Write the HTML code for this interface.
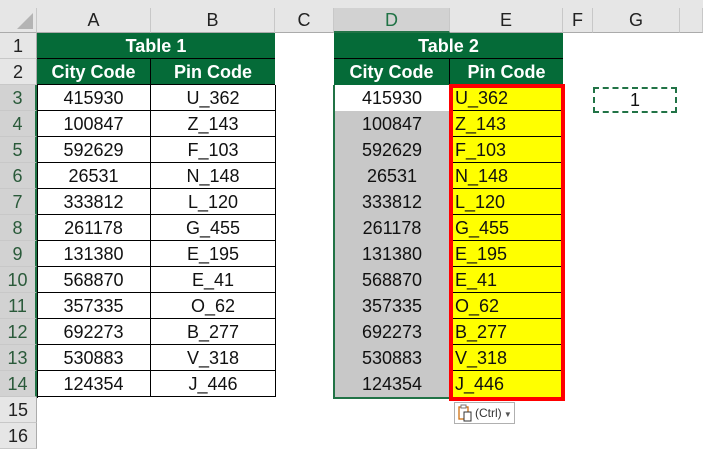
<!DOCTYPE html>
<html><head><meta charset="utf-8"><style>
body{margin:0;width:703px;height:441px;overflow:hidden;background:#fff;font-family:"Liberation Sans",Calibri,sans-serif;position:relative}
div{position:absolute;box-sizing:border-box}
.ch{top:8px;height:25px;background:#e6e6e6;border-right:1px solid #c8c8c8;border-bottom:1px solid #ababab;text-align:center;font-size:18px;line-height:25px;color:#222}
.rh{left:0;width:37px;height:26px;background:#e6e6e6;border-bottom:1px solid #c8c8c8;border-right:1px solid #ababab;text-align:center;font-size:18px;line-height:26px;color:#222}
.rh.s{background:#d2d2d2;color:#2a5a3a;border-right:2px solid #217346}
.g{background:#056b38;color:#fff;font-weight:bold;text-align:center;font-size:18px;line-height:26px;height:26px}
.c{height:26px;text-align:center;font-size:18px;line-height:26px;color:#111;border-bottom:1px solid #000;border-right:1px solid #000}
.y{height:26px;font-size:18px;line-height:26px;background:#ff0;color:#111;padding-left:5px;border-bottom:1px solid #000}
.d{height:26px;text-align:center;font-size:18px;line-height:26px;color:#111;background:#c8c8c8}
</style></head><body>
<div style="left:0;top:0;width:703px;height:8px;background:#e6e6e6"></div>
<div class="ch" style="left:0;width:37px"><svg width="37" height="25" style="position:absolute;left:0;top:0"><polygon points="33,5 33,21 17,21" fill="#b4b4b4"/></svg></div>
<div class="ch" style="left:37px;width:114px">A</div>
<div class="ch" style="left:151px;width:124px">B</div>
<div class="ch" style="left:275px;width:59px">C</div>
<div class="ch" style="left:334px;width:116px;background:#d2d2d2;color:#217346;border-bottom:2px solid #217346">D</div>
<div class="ch" style="left:450px;width:113px">E</div>
<div class="ch" style="left:563px;width:30px">F</div>
<div class="ch" style="left:593px;width:87px">G</div>
<div class="ch" style="left:680px;width:23px"></div>

<div class="rh" style="top:33px">1</div>
<div class="rh" style="top:59px">2</div>
<div class="rh s" style="top:85px">3</div>
<div class="rh s" style="top:111px">4</div>
<div class="rh s" style="top:137px">5</div>
<div class="rh s" style="top:163px">6</div>
<div class="rh s" style="top:189px">7</div>
<div class="rh s" style="top:215px">8</div>
<div class="rh s" style="top:241px">9</div>
<div class="rh s" style="top:267px">10</div>
<div class="rh s" style="top:293px">11</div>
<div class="rh s" style="top:319px">12</div>
<div class="rh s" style="top:345px">13</div>
<div class="rh s" style="top:371px">14</div>
<div class="rh" style="top:397px">15</div>
<div class="rh" style="top:423px">16</div>

<!-- Table 1 -->
<div class="g" style="left:37px;top:33px;width:238px;border-bottom:1px solid #000">Table 1</div>
<div class="g" style="left:37px;top:59px;width:114px;border-right:1px solid #000;border-bottom:1px solid #000">City Code</div>
<div class="g" style="left:151px;top:59px;width:124px;border-bottom:1px solid #000">Pin Code</div>
<div style="left:37px;top:85px;width:239px;height:313px;border-left:1px solid #000"></div>
<div class="c" style="left:37px;top:85px;width:114px">415930</div><div class="c" style="left:151px;top:85px;width:125px">U_362</div>
<div class="c" style="left:37px;top:111px;width:114px">100847</div><div class="c" style="left:151px;top:111px;width:125px">Z_143</div>
<div class="c" style="left:37px;top:137px;width:114px">592629</div><div class="c" style="left:151px;top:137px;width:125px">F_103</div>
<div class="c" style="left:37px;top:163px;width:114px">26531</div><div class="c" style="left:151px;top:163px;width:125px">N_148</div>
<div class="c" style="left:37px;top:189px;width:114px">333812</div><div class="c" style="left:151px;top:189px;width:125px">L_120</div>
<div class="c" style="left:37px;top:215px;width:114px">261178</div><div class="c" style="left:151px;top:215px;width:125px">G_455</div>
<div class="c" style="left:37px;top:241px;width:114px">131380</div><div class="c" style="left:151px;top:241px;width:125px">E_195</div>
<div class="c" style="left:37px;top:267px;width:114px">568870</div><div class="c" style="left:151px;top:267px;width:125px">E_41</div>
<div class="c" style="left:37px;top:293px;width:114px">357335</div><div class="c" style="left:151px;top:293px;width:125px">O_62</div>
<div class="c" style="left:37px;top:319px;width:114px">692273</div><div class="c" style="left:151px;top:319px;width:125px">B_277</div>
<div class="c" style="left:37px;top:345px;width:114px">530883</div><div class="c" style="left:151px;top:345px;width:125px">V_318</div>
<div class="c" style="left:37px;top:371px;width:114px">124354</div><div class="c" style="left:151px;top:371px;width:125px">J_446</div>

<!-- Table 2 -->
<div class="g" style="left:334px;top:33px;width:229px;border-bottom:1px solid #000">Table 2</div>
<div class="g" style="left:334px;top:59px;width:116px;border-right:1px solid #000">City Code</div>
<div class="g" style="left:450px;top:59px;width:113px">Pin Code</div>
<div class="d" style="left:334px;top:85px;width:116px;background:#fff">415930</div>
<div class="d" style="left:334px;top:111px;width:116px">100847</div>
<div class="d" style="left:334px;top:137px;width:116px">592629</div>
<div class="d" style="left:334px;top:163px;width:116px">26531</div>
<div class="d" style="left:334px;top:189px;width:116px">333812</div>
<div class="d" style="left:334px;top:215px;width:116px">261178</div>
<div class="d" style="left:334px;top:241px;width:116px">131380</div>
<div class="d" style="left:334px;top:267px;width:116px">568870</div>
<div class="d" style="left:334px;top:293px;width:116px">357335</div>
<div class="d" style="left:334px;top:319px;width:116px">692273</div>
<div class="d" style="left:334px;top:345px;width:116px">530883</div>
<div class="d" style="left:334px;top:371px;width:116px">124354</div>
<div style="left:333px;top:85px;width:118px;height:314px;border:2px solid #217346;border-top:none"></div>

<div class="y" style="left:450px;top:85px;width:114px">U_362</div>
<div class="y" style="left:450px;top:111px;width:114px">Z_143</div>
<div class="y" style="left:450px;top:137px;width:114px">F_103</div>
<div class="y" style="left:450px;top:163px;width:114px">N_148</div>
<div class="y" style="left:450px;top:189px;width:114px">L_120</div>
<div class="y" style="left:450px;top:215px;width:114px">G_455</div>
<div class="y" style="left:450px;top:241px;width:114px">E_195</div>
<div class="y" style="left:450px;top:267px;width:114px">E_41</div>
<div class="y" style="left:450px;top:293px;width:114px">O_62</div>
<div class="y" style="left:450px;top:319px;width:114px">B_277</div>
<div class="y" style="left:450px;top:345px;width:114px">V_318</div>
<div class="y" style="left:450px;top:371px;width:114px;border-bottom:none">J_446</div>
<div style="left:449px;top:84px;width:116px;height:317px;border:4px solid #f00"></div>

<!-- G3 -->
<div style="left:593px;top:87px;width:84px;height:26px;border:2px dashed #217346;text-align:center;font-size:18px;line-height:22px;color:#111">1</div>

<!-- paste button -->
<div style="left:454px;top:402px;width:61px;height:22px;border:1px solid #b0b0b0;background:#fff;font-size:12px;line-height:20px;color:#333;padding-left:20px">(Ctrl)<span style="font-size:8px;color:#555"> ▼</span>
<svg width="16" height="18" style="position:absolute;left:3px;top:1px"><rect x="1" y="3" width="9" height="12" fill="none" stroke="#d07010" stroke-width="1.3"/><rect x="3" y="1" width="5" height="3" fill="#fff" stroke="#777"/><rect x="6" y="8" width="7" height="9" fill="#fff" stroke="#333"/></svg></div>
</body></html>
